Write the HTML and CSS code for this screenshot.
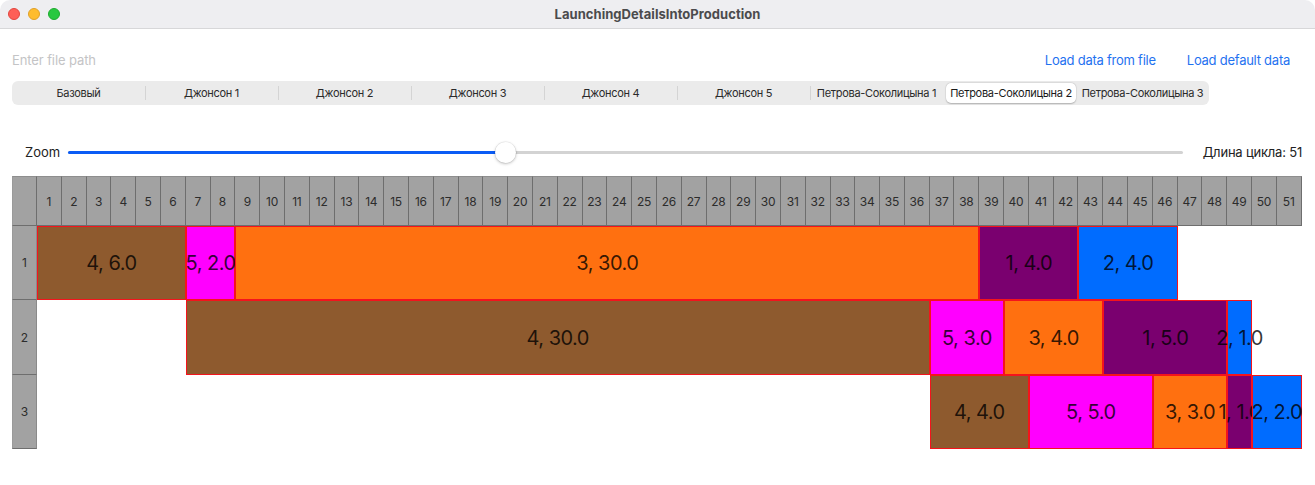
FILE: index.html
```html
<!DOCTYPE html>
<html lang="ru">
<head>
<meta charset="utf-8">
<title>LaunchingDetailsIntoProduction</title>
<link rel="stylesheet" href="styles.css">
</head>
<body>
<div class="window">
  <header class="titlebar">
    <div class="lights">
      <span class="light red"></span>
      <span class="light yellow"></span>
      <span class="light green"></span>
    </div>
    <div class="title">LaunchingDetailsIntoProduction</div>
    <div class="spacer"></div>
  </header>

  <main class="content">
    <div class="toolbar">
      <input class="path" type="text" placeholder="Enter file path">
      <a class="link" href="#">Load data from file</a>
      <a class="link" href="#">Load default data</a>
    </div>

    <div class="segmented">
      <div class="seg">Базовый</div>
      <div class="seg">Джонсон 1</div>
      <div class="seg">Джонсон 2</div>
      <div class="seg">Джонсон 3</div>
      <div class="seg">Джонсон 4</div>
      <div class="seg">Джонсон 5</div>
      <div class="seg">Петрова-Соколицына 1</div>
      <div class="seg selected">Петрова-Соколицына 2</div>
      <div class="seg">Петрова-Соколицына 3</div>
    </div>

    <div class="zoom-row">
      <span class="zoom-label">Zoom</span>
      <div class="slider">
        <div class="track">
          <div class="fill" style="width: 39.2%"></div>
          <div class="knob" style="left: 39.2%"></div>
        </div>
      </div>
      <span class="cycle">Длина цикла: 51</span>
    </div>

    <div class="chart">
      <div class="hcell corner"></div>
      <div class="hcell">1</div><div class="hcell">2</div><div class="hcell">3</div><div class="hcell">4</div><div class="hcell">5</div>
      <div class="hcell">6</div><div class="hcell">7</div><div class="hcell">8</div><div class="hcell">9</div><div class="hcell">10</div>
      <div class="hcell">11</div><div class="hcell">12</div><div class="hcell">13</div><div class="hcell">14</div><div class="hcell">15</div>
      <div class="hcell">16</div><div class="hcell">17</div><div class="hcell">18</div><div class="hcell">19</div><div class="hcell">20</div>
      <div class="hcell">21</div><div class="hcell">22</div><div class="hcell">23</div><div class="hcell">24</div><div class="hcell">25</div>
      <div class="hcell">26</div><div class="hcell">27</div><div class="hcell">28</div><div class="hcell">29</div><div class="hcell">30</div>
      <div class="hcell">31</div><div class="hcell">32</div><div class="hcell">33</div><div class="hcell">34</div><div class="hcell">35</div>
      <div class="hcell">36</div><div class="hcell">37</div><div class="hcell">38</div><div class="hcell">39</div><div class="hcell">40</div>
      <div class="hcell">41</div><div class="hcell">42</div><div class="hcell">43</div><div class="hcell">44</div><div class="hcell">45</div>
      <div class="hcell">46</div><div class="hcell">47</div><div class="hcell">48</div><div class="hcell">49</div><div class="hcell">50</div>
      <div class="hcell">51</div>

      <div class="rlabel r1">1</div>
      <div class="rlabel r2">2</div>
      <div class="rlabel r3">3</div>

      <div class="bar brown r1" style="grid-column: 2 / span 6">4, 6.0</div>
      <div class="bar magenta r1" style="grid-column: 8 / span 2">5, 2.0</div>
      <div class="bar orange r1" style="grid-column: 10 / span 30">3, 30.0</div>
      <div class="bar purple r1" style="grid-column: 40 / span 4">1, 4.0</div>
      <div class="bar blue r1" style="grid-column: 44 / span 4">2, 4.0</div>

      <div class="bar brown r2" style="grid-column: 8 / span 30">4, 30.0</div>
      <div class="bar magenta r2" style="grid-column: 38 / span 3">5, 3.0</div>
      <div class="bar orange r2" style="grid-column: 41 / span 4">3, 4.0</div>
      <div class="bar purple r2" style="grid-column: 45 / span 5">1, 5.0</div>
      <div class="bar blue r2" style="grid-column: 50 / span 1">2, 1.0</div>

      <div class="bar brown r3" style="grid-column: 38 / span 4">4, 4.0</div>
      <div class="bar magenta r3" style="grid-column: 42 / span 5">5, 5.0</div>
      <div class="bar orange r3" style="grid-column: 47 / span 3">3, 3.0</div>
      <div class="bar purple r3" style="grid-column: 50 / span 1">1, 1.0</div>
      <div class="bar blue r3" style="grid-column: 51 / span 2">2, 2.0</div>
    </div>
  </main>
</div>
</body>
</html>
```

FILE: styles.css
```css
* { box-sizing: border-box; }

html, body {
  margin: 0;
  padding: 0;
  background: #ffffff;
}

body {
  width: 1315px;
  height: 485px;
  overflow: hidden;
  font-family: Inter, "Noto Sans", "Liberation Sans", sans-serif;
  color: #222;
}

.window {
  width: 1315px;
  height: 485px;
  background: #ffffff;
  border-radius: 10px 10px 0 0;
  overflow: hidden;
}

/* Title bar */
.titlebar {
  height: 29px;
  background: #eeeef1;
  border-bottom: 1px solid #d7d7d9;
  display: grid;
  grid-template-columns: 1fr auto 1fr;
  align-items: center;
}

.lights {
  display: flex;
  gap: 8px;
  padding-left: 8px;
  padding-bottom: 1px;
}

.light {
  width: 12px;
  height: 12px;
  border-radius: 50%;
}
.light.red { background: #fe5f57; border: 0.5px solid #e2463f; }
.light.yellow { background: #febc2e; border: 0.5px solid #e0a028; }
.light.green { background: #28c840; border: 0.5px solid #1eab2f; }

.title {
  font-size: 13px;
  font-weight: 700;
  color: #4b4b4d;
  letter-spacing: 0.05px;
}

/* Content */
.content {
  padding: 0 12px;
}

.toolbar {
  display: flex;
  align-items: center;
  gap: 31px;
  height: 20px;
  margin-top: 21px;
  padding-right: 13px;
}

.path {
  flex: 1;
  border: none;
  outline: none;
  padding: 0;
  margin: 0;
  background: transparent;
  font-family: inherit;
  font-size: 13px;
  letter-spacing: -0.1px;
  color: #222;
}
.path::placeholder { color: #c4c4c6; }

.link {
  font-size: 13px;
  letter-spacing: -0.25px;
  color: #1f72f0;
  text-decoration: none;
}

/* Segmented control */
.segmented {
  margin-top: 11px;
  width: 1197px;
  height: 24px;
  background: #ebebeb;
  border-radius: 6px;
  display: flex;
  align-items: center;
}

.seg {
  position: relative;
  width: 133px;
  height: 24px;
  display: flex;
  align-items: center;
  justify-content: center;
  font-size: 11px;
  letter-spacing: -0.3px;
  color: #2a2a2a;
  white-space: nowrap;
}

.seg + .seg::before {
  content: "";
  position: absolute;
  left: 0;
  top: 5px;
  width: 1px;
  height: 14px;
  background: #d4d4d4;
}

.seg.selected::before,
.seg.selected + .seg::before {
  display: none;
}

.seg.selected {
  height: 20px;
  margin: 0 1px 0 3px;
  width: 130px;
  background: #ffffff;
  border-radius: 5px;
  box-shadow: 0 0.5px 1.5px rgba(0, 0, 0, 0.22), 0 0 0 0.5px rgba(0, 0, 0, 0.06);
  color: #1a1a1a;
}
.seg.selected + .seg { width: 131px; }

/* Zoom slider row */
.zoom-row {
  margin-top: 35px;
  height: 24px;
  display: flex;
  align-items: center;
  padding: 0 1px 0 13px;
}

.zoom-label {
  font-size: 13px;
  color: #222;
}

.slider {
  flex: 1;
  margin: 0 20px 0 8px;
  height: 24px;
  display: flex;
  align-items: center;
}

.track {
  position: relative;
  width: 100%;
  height: 3px;
  border-radius: 2px;
  background: #d3d3d3;
}

.fill {
  height: 3px;
  border-radius: 2px;
  background: #0b5cf5;
}

.knob {
  position: absolute;
  top: 50%;
  width: 21px;
  height: 21px;
  margin-left: -10.5px;
  margin-top: -10.5px;
  border-radius: 50%;
  background: #ffffff;
  box-shadow: 0 1px 3px rgba(0, 0, 0, 0.25), 0 0 0 0.5px rgba(0, 0, 0, 0.08);
}

.cycle {
  font-size: 13px;
  letter-spacing: -0.2px;
  color: #222;
}

/* Chart */
.chart {
  margin-top: 12px;
  display: grid;
  grid-template-columns: 25px repeat(51, 24.8px);
  grid-template-rows: 50px repeat(3, 74.4px);
}

.hcell {
  grid-row: 1;
  background: #a2a2a2;
  border-top: 1px solid #8e8e8e;
  border-right: 1px solid #6e6e6e;
  border-bottom: 1px solid #6e6e6e;
  display: flex;
  align-items: center;
  justify-content: center;
  font-size: 12px;
  letter-spacing: -0.2px;
  color: #2c2c2c;
}

.hcell.corner {
  border-left: 1px solid #9a9a9a;
}

.rlabel {
  grid-column: 1;
  background: #a2a2a2;
  border-left: 1px solid #9a9a9a;
  border-right: 1px solid #8a8a8a;
  border-bottom: 1px solid #6e6e6e;
  display: flex;
  align-items: center;
  justify-content: center;
  font-size: 12px;
  color: #2c2c2c;
}

.r1 { grid-row: 2; }
.r2 { grid-row: 3; }
.r3 { grid-row: 4; }

.bar {
  border: 1px solid #f4141c;
  display: flex;
  align-items: center;
  justify-content: center;
  white-space: nowrap;
  font-size: 20px;
  letter-spacing: -0.5px;
  color: rgba(0, 0, 0, 0.8);
  min-width: 0;
}

.brown { background: #8e5a2e; }
.magenta { background: #ff00ff; }
.orange { background: #ff7010; }
.purple { background: #7a006f; }
.blue { background: #006cff; }
```
